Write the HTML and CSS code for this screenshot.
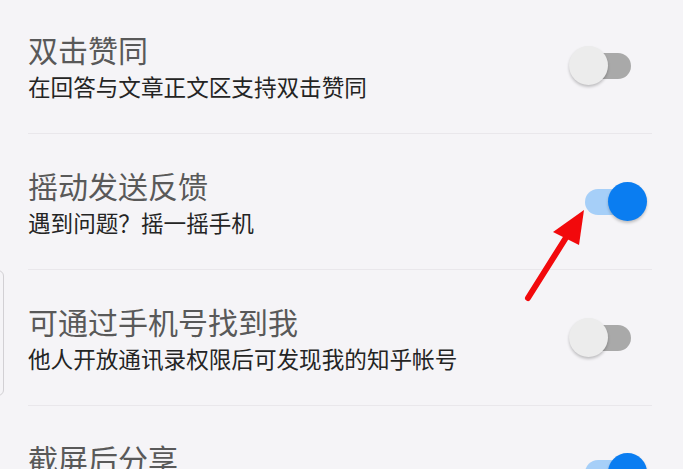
FILE: index.html
```html
<!DOCTYPE html>
<html lang="zh-CN">
<head>
  <meta charset="UTF-8" />
  <meta name="viewport" content="width=device-width, initial-scale=1.0"/>
  <title>设置</title>
  <link rel="stylesheet" href="styles.css">
</head>
<body>

  <div class="edge"></div>

  <ul class="settings">
    <li class="item">
      <div class="text">
        <div class="title">双击赞同</div>
        <div class="desc">在回答与文章正文区支持双击赞同</div>
      </div>
      <div class="switch"><div class="track"></div><div class="thumb"></div></div>
    </li>

    <li class="item">
      <div class="text">
        <div class="title">摇动发送反馈</div>
        <div class="desc">遇到问题？摇一摇手机</div>
      </div>
      <div class="switch on"><div class="track"></div><div class="thumb"></div></div>
    </li>

    <li class="item">
      <div class="text">
        <div class="title">可通过手机号找到我</div>
        <div class="desc">他人开放通讯录权限后可发现我的知乎帐号</div>
      </div>
      <div class="switch"><div class="track"></div><div class="thumb"></div></div>
    </li>

    <li class="item item-last">
      <div class="text">
        <div class="title">截屏后分享</div>
      </div>
      <div class="switch on"><div class="track"></div><div class="thumb"></div></div>
    </li>
  </ul>

  <!-- annotation arrow pointing at the switch -->
  <svg class="arrow" width="683" height="469" viewBox="0 0 683 469">
    <line x1="528" y1="298" x2="567" y2="236" stroke="#f2090c" stroke-width="6" stroke-linecap="round"/>
    <polygon points="584,210 553,232 579,245" fill="#f2090c"/>
  </svg>

</body>
</html>
```

FILE: styles.css
```css
body {
  font-family: "Noto Sans CJK SC", "Noto Sans", sans-serif;
  margin: 0;
  padding: 0;
  background: #f5f4f7;
  height: 469px;
  overflow: hidden;
  position: relative;
}

.settings {
  list-style: none;
  margin: -3px 0 0 0;
  padding: 0 31px 0 28px;
  border-top: 1px solid #ebe9ed;
}

.item {
  display: flex;
  align-items: center;
  justify-content: space-between;
  height: 135px;
  border-bottom: 1px solid #e9e7eb;
}

.item-last {
  align-items: flex-start;
  height: auto;
  padding-top: 33px;
  border-bottom: none;
}
.item-last .switch {
  margin-top: 14px;
}

.title {
  font-size: 30px;
  line-height: 38px;
  color: #595959;
}

.desc {
  font-size: 22.6px;
  line-height: 30px;
  color: #242424;
  margin-top: 4px;
}

/* toggle switch */
.switch {
  position: relative;
  width: 78px;
  height: 40px;
  margin-right: 5px;
  flex-shrink: 0;
}
.switch .track {
  position: absolute;
  left: 16px;
  right: 16px;
  top: 7px;
  height: 26px;
  border-radius: 13px;
  background: #a9a9a9;
}
.switch .thumb {
  position: absolute;
  top: 0;
  left: 0;
  width: 39px;
  height: 39px;
  border-radius: 50%;
  background: #ececec;
  box-shadow: 0 2px 3px rgba(0,0,0,0.22);
}
.switch.on .track {
  background: #a6cff8;
}
.switch.on .thumb {
  left: auto;
  right: 0;
  background: #0a7df1;
}

.edge {
  position: absolute;
  left: -10px;
  top: 270px;
  width: 12px;
  height: 124px;
  border: 1px solid #d2d0d4;
  border-radius: 6px;
}

.arrow {
  position: absolute;
  left: 0;
  top: 0;
}
```
